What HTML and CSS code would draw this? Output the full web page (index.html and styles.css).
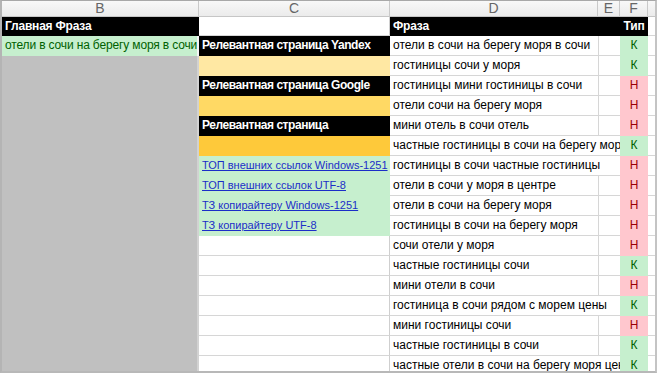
FILE: index.html
```html
<!DOCTYPE html>
<html lang="ru">
<head>
<meta charset="utf-8">
<title>Sheet</title>
<link rel="stylesheet" href="styles.css">
</head>
<body>
<div class="sheet">
  <div class="lt">B</div>
  <div class="lt">C</div>
  <div class="lt">D</div>
  <div class="lt">E</div>
  <div class="lt">F</div>
  <div class="lt lt-g"></div>

  <div class="c hdr">Главная Фраза</div>
  <div class="c blank-h"></div>
  <div class="c hdr">Фраза</div>
  <div class="c hdr"></div>
  <div class="c hdr ctr">Тип</div>
  <div class="c g"></div>

  <div class="bgray"></div>

  <div class="c good">отели в сочи на берегу моря в сочи</div>
  <div class="c dark">Релевантная страница Yandex</div>
  <div class="c d">отели в сочи на берегу моря в сочи</div>
  <div class="c e"></div>
  <div class="c k">К</div>
  <div class="c g"></div>

  <div class="c y1"></div>
  <div class="c d">гостиницы сочи у моря</div>
  <div class="c e"></div>
  <div class="c k">К</div>
  <div class="c g"></div>

  <div class="c dark">Релевантная страница Google</div>
  <div class="c d">гостиницы мини гостиницы в сочи</div>
  <div class="c e"></div>
  <div class="c n">Н</div>
  <div class="c g"></div>

  <div class="c y2"></div>
  <div class="c d">отели сочи на берегу моря</div>
  <div class="c e"></div>
  <div class="c n">Н</div>
  <div class="c g"></div>

  <div class="c dark">Релевантная страница</div>
  <div class="c d">мини отель в сочи отель</div>
  <div class="c e"></div>
  <div class="c n">Н</div>
  <div class="c g"></div>

  <div class="c y3"></div>
  <div class="c d wide">частные гостиницы в сочи на берегу моря</div>
  <div class="c k">К</div>
  <div class="c g"></div>

  <div class="c lnk"><a href="#">ТОП внешних ссылок Windows-1251</a></div>
  <div class="c d wide">гостиницы в сочи частные гостиницы</div>
  <div class="c n">Н</div>
  <div class="c g"></div>

  <div class="c lnk"><a href="#">ТОП внешних ссылок UTF-8</a></div>
  <div class="c d">отели в сочи у моря в центре</div>
  <div class="c e"></div>
  <div class="c n">Н</div>
  <div class="c g"></div>

  <div class="c lnk"><a href="#">ТЗ копирайтеру Windows-1251</a></div>
  <div class="c d">отели в сочи на берегу моря</div>
  <div class="c e"></div>
  <div class="c n">Н</div>
  <div class="c g"></div>

  <div class="c lnk"><a href="#">ТЗ копирайтеру UTF-8</a></div>
  <div class="c d">гостиницы в сочи на берегу моря</div>
  <div class="c e"></div>
  <div class="c n">Н</div>
  <div class="c g"></div>

  <div class="c w"></div>
  <div class="c d">сочи отели у моря</div>
  <div class="c e"></div>
  <div class="c n">Н</div>
  <div class="c g"></div>

  <div class="c w"></div>
  <div class="c d">частные гостиницы сочи</div>
  <div class="c e"></div>
  <div class="c k">К</div>
  <div class="c g"></div>

  <div class="c w"></div>
  <div class="c d">мини отели в сочи</div>
  <div class="c e"></div>
  <div class="c n">Н</div>
  <div class="c g"></div>

  <div class="c w"></div>
  <div class="c d wide">гостиница в сочи рядом с морем цены</div>
  <div class="c k">К</div>
  <div class="c g"></div>

  <div class="c w"></div>
  <div class="c d">мини гостиницы сочи</div>
  <div class="c e"></div>
  <div class="c n">Н</div>
  <div class="c g"></div>

  <div class="c w"></div>
  <div class="c d">частные гостиницы в сочи</div>
  <div class="c e"></div>
  <div class="c k">К</div>
  <div class="c g"></div>

  <div class="c w"></div>
  <div class="c d wide">частные отели в сочи на берегу моря цены</div>
  <div class="c k">К</div>
  <div class="c g"></div>
</div>
</body>
</html>
```
FILE: styles.css
```css
html, body {
  margin: 0;
  padding: 0;
  background: #ffffff;
}

.sheet {
  box-sizing: border-box;
  width: 657px;
  height: 373px;
  overflow: hidden;
  border-top: 1px solid #a8a8a8;
  border-left: 2px solid #b4b4b4;
  border-right: 2px solid #c4c4c4;
  border-bottom: 2px solid #b8b8b8;
  display: grid;
  grid-template-columns: 197px 191px 208px 22px 28px 1fr;
  grid-template-rows: 16px 19px repeat(17, 20px);
  font-family: "Liberation Sans", Arial, sans-serif;
  font-size: 12px;
  color: #000;
}

.lt {
  background: linear-gradient(#f8f8f8, #ebebeb);
  border-right: 1px solid #c9c9c9;
  border-bottom: 1px solid #c6c6c6;
  color: #666666;
  font-size: 14px;
  line-height: 15px;
  text-align: center;
}
.lt-g { border-right: none; }

.c {
  box-sizing: border-box;
  height: 100%;
  line-height: 19px;
  padding-left: 3px;
  white-space: nowrap;
  overflow: hidden;
}

.hdr {
  background: #000;
  color: #fff;
  font-weight: bold;
  letter-spacing: -0.2px;
}
.ctr { text-align: center; padding-left: 0; }

.blank-h {
  background: #fff;
  border-bottom: 1px solid #d6d6d6;
  border-right: 1px solid #d0d0d0;
}

.bgray {
  grid-column: 1;
  grid-row: 4 / span 16;
  background: #c0c0c0;
  border-right: 2px solid #d2d2d2;
}

.good {
  background: #c6efce;
  color: #006100;
  border-right: 2px solid #f4f4f4;
  letter-spacing: -0.15px;
}

.dark {
  background: #000;
  color: #fff;
  font-weight: bold;
  letter-spacing: -0.45px;
}
.y1 { background: #ffe8a3; }
.y2 { background: #ffd964; }
.y3 { background: #fec93a; }

.lnk {
  background: #c6efce;
  font-size: 11px;
}
.lnk a {
  color: #1c2ec8;
  text-decoration: underline;
}

.w {
  background: #fff;
  border-bottom: 1px solid #d6d6d6;
  border-right: 1px solid #cfcfcf;
}

.d {
  background: #fff;
  border-bottom: 1px solid #d6d6d6;
}
.wide { grid-column: span 2; }

.e {
  background: #fff;
  border-left: 1px solid #d6d6d6;
  border-bottom: 1px solid #d6d6d6;
}

.k, .n {
  text-align: center;
  padding-left: 0;
}
.k {
  background: #c6efce;
  color: #006100;
}
.n {
  background: #ffc7ce;
  color: #9c0006;
}

.g {
  background: #fff;
  border-bottom: 1px solid #d6d6d6;
}
```
